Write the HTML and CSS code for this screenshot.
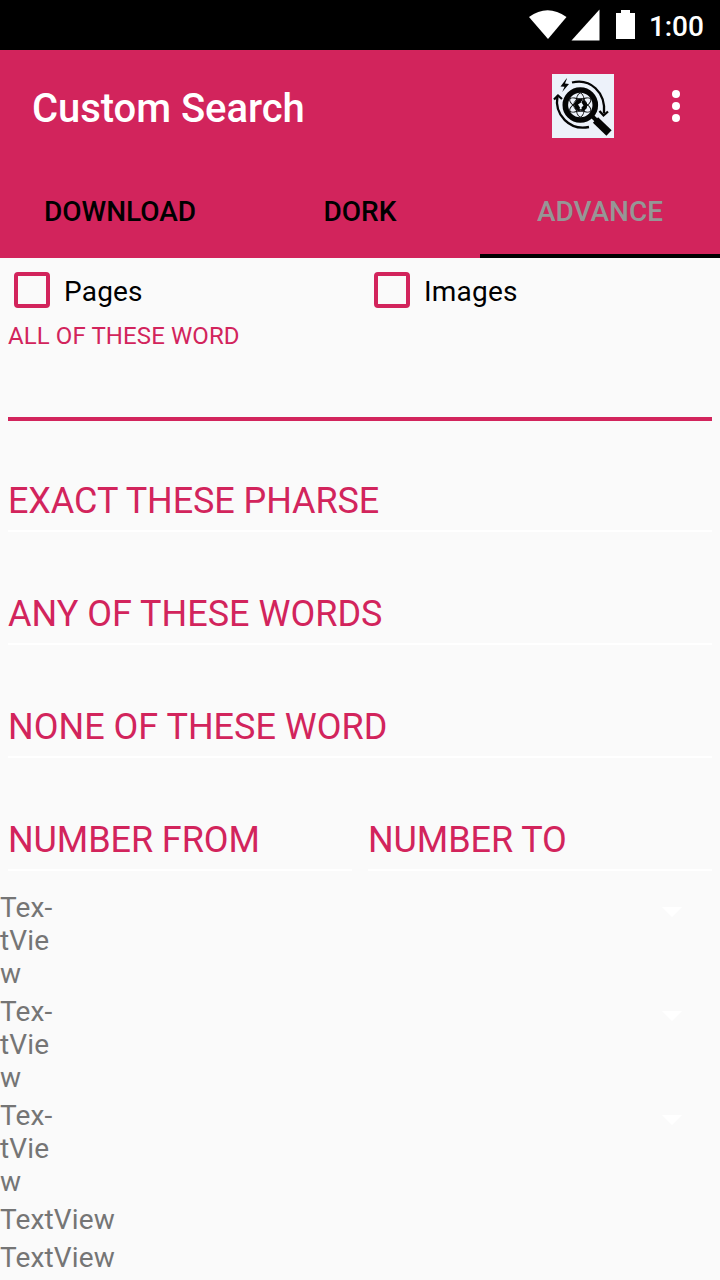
FILE: index.html
```html
<!DOCTYPE html>
<html lang="en">
<head>
<meta charset="utf-8">
<title>Custom Search</title>
<link rel="stylesheet" href="styles.css">
</head>
<body>
<div class="status">
  <svg class="status-icons" width="120" height="50" viewBox="0 0 120 50" fill="#fff">
    <path d="M9 17Q27.500 3.500 46.500 17L28 39Z"/>
    <path d="M51.500 40.500H79.500V9.500Z"/>
    <path d="M96 13h5v-3h9v3h5v26H96z"/>
  </svg>
  <span class="clock">1:00</span>
</div>
<header class="header">
  <div class="toolbar">
    <h1 class="title">Custom Search</h1>
    <svg class="logo" width="62" height="64" viewBox="0 0 62 64" fill="none" stroke="#050505">
      <rect width="62" height="64" fill="#edf2fa" stroke="none"/>
      <path d="M14.500 4.500 8.500 12.500l4 .3-2.300 5.200 6.800-8-4-.5 2-5z" fill="#050505" stroke="none"/>
      <path d="M20 8.500C38 4 54 18 52 39.500" stroke-width="2.300"/>
      <path d="M47.500 37l4 4.500 4.500-4" stroke-width="2.300"/>
      <path d="M5.500 22C2 41 18 57 37 53" stroke-width="2.300"/>
      <path d="M2 25.500l4-4 4 3.500" stroke-width="2.300"/>
      <circle cx="28.300" cy="31" r="15" stroke-width="5.600"/>
      <path d="M40 42l5 5" stroke-width="4"/>
      <path d="M43.500 46 57 59" stroke-width="7.500"/>
      <g stroke-width=".9">
        <ellipse cx="28.300" cy="31" rx="4.500" ry="12"/>
        <ellipse cx="28.300" cy="31" rx="4.500" ry="12" transform="rotate(60 28.300 31)"/>
        <ellipse cx="28.300" cy="31" rx="4.500" ry="12" transform="rotate(120 28.300 31)"/>
        <circle cx="28.300" cy="31" r="6.500"/>
      </g>
      <path d="M22 30l3-4.500 5-1-1 4-3 2 2 3-1 4-4-3zM31 25.500l4 4-.5 5-4 3-1-4 2-2-2-3z" fill="#050505" stroke="none"/>
    </svg>
    <svg class="more" width="8" height="32" viewBox="0 0 8 32" fill="#fff">
      <circle cx="4" cy="4" r="4"/><circle cx="4" cy="16" r="4"/><circle cx="4" cy="28" r="4"/>
    </svg>
  </div>
  <nav class="tabs">
    <div class="tab">DOWNLOAD</div>
    <div class="tab">DORK</div>
    <div class="tab tab-active">ADVANCE</div>
  </nav>
</header>
<main>
  <div class="checks">
    <label class="check"><span class="box"></span>Pages</label>
    <label class="check"><span class="box"></span>Images</label>
  </div>
  <div class="field field-focused">ALL OF THESE WORD</div>
  <div class="field field-exact">EXACT THESE PHARSE</div>
  <div class="field">ANY OF THESE WORDS</div>
  <div class="field">NONE OF THESE WORD</div>
  <div class="pair">
    <div class="field">NUMBER FROM</div>
    <div class="field">NUMBER TO</div>
  </div>
  <div class="list">
    <div class="row"><div>Tex-<br>tVie<br>w</div><span class="caret"></span></div>
    <div class="row"><div>Tex-<br>tVie<br>w</div><span class="caret"></span></div>
    <div class="row"><div>Tex-<br>tVie<br>w</div><span class="caret"></span></div>
    <div class="row">TextView</div>
    <div class="row">TextView</div>
  </div>
</main>
</body>
</html>
```
FILE: styles.css
```css
* { box-sizing: border-box; }
body {
  margin: 0;
  width: 720px;
  height: 1280px;
  overflow: hidden;
  background: #fafafa;
  font-family: Roboto, sans-serif;
  font-size: 28px;
  line-height: 33px;
}
.status {
  display: flex;
  height: 50px;
  padding-left: 520px;
  background: #000;
  color: #fff;
}
.status-icons { margin-right: 9px; }
.clock { padding-top: 10px; font-weight: 500; letter-spacing: -0.1px; }
.header { background: #d2245c; }
.toolbar {
  display: flex;
  align-items: center;
  height: 112px;
  padding: 0 40px 0 32px;
}
.title {
  flex: 1;
  margin: 0;
  padding-top: 6px;
  color: #fff;
  font-size: 40px;
  line-height: 48px;
  font-weight: 500;
  letter-spacing: -0.05px;
}
.logo { margin-right: 58px; }
.tabs { display: grid; grid-template-columns: repeat(3, 1fr); height: 96px; }
.tab {
  padding-top: 33px;
  text-align: center;
  font-weight: 500;
  color: #000;
}
.tab-active { color: #969696; border-bottom: 4px solid #000; }
.checks { display: grid; grid-template-columns: 1fr 1fr; height: 64px; padding-top: 14px; }
.check {
  display: flex;
  height: 36px;
  padding-left: 14px;
  gap: 14px;
  line-height: 39px;
  letter-spacing: 0.2px;
}
.box { width: 36px; height: 36px; border: 4px solid #d2245c; border-radius: 4px; }
.field {
  height: 113px;
  margin: 0 8px;
  padding-top: 61px;
  border-bottom: 2px solid #fff;
  color: #d2245c;
  font-size: 36px;
  line-height: 42px;
  white-space: nowrap;
}
.field-focused {
  height: 99px;
  margin-bottom: -2px;
  padding-top: 0;
  border-bottom: 4px solid #d2245c;
  font-size: 24px;
  line-height: 28px;
  letter-spacing: 0.1px;
}
.field-exact, .pair .field { letter-spacing: -0.09px; }
.pair { display: grid; grid-template-columns: 1fr 1fr; }
.list {
  display: flex;
  flex-direction: column;
  gap: 5px;
  padding-top: 20px;
  color: #757575;
  letter-spacing: 0.15px;
}
.row { display: flex; justify-content: space-between; }
.caret {
  margin: 16px 38px 0 0;
  width: 20px;
  height: 10px;
  background: #fff;
  clip-path: polygon(0 0, 100% 0, 50% 100%);
}
```
